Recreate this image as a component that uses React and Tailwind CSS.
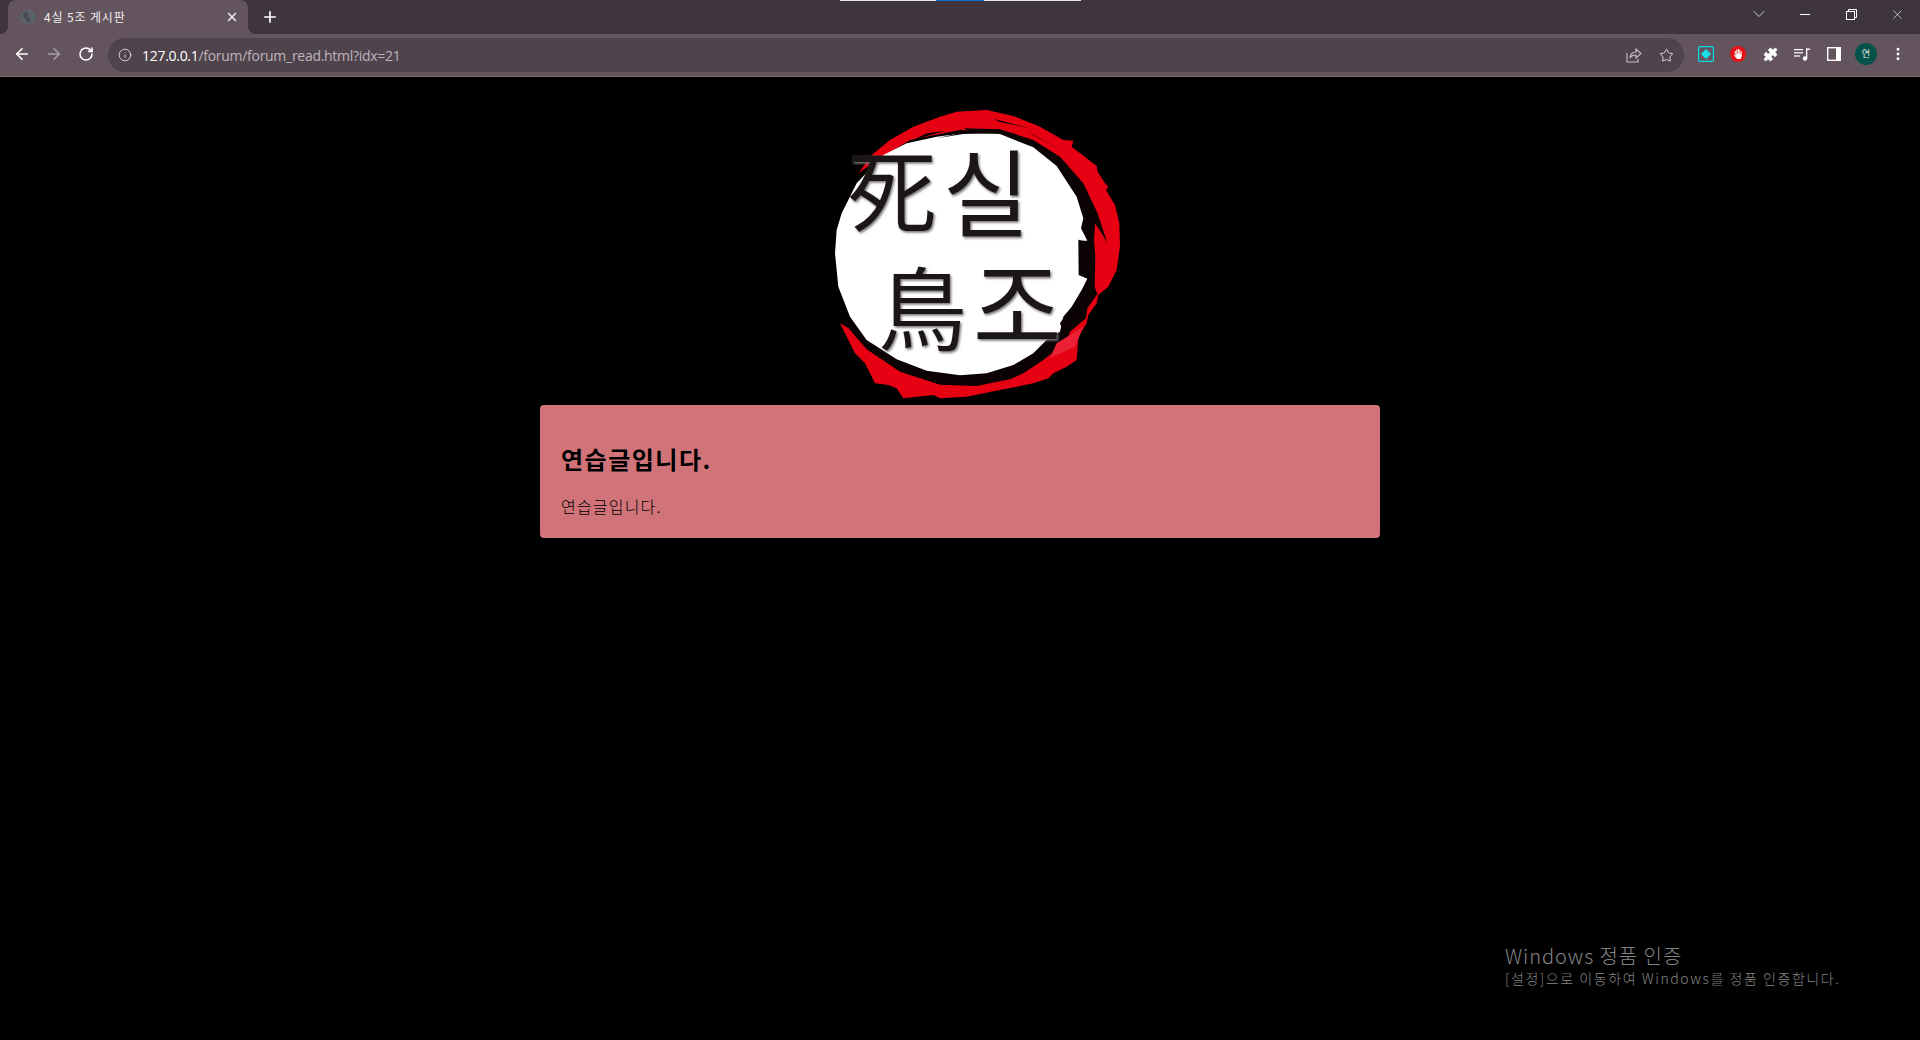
import React from "react";
import { ArrowLeft, ArrowRight, RotateCw, Info, Star, X, Plus, ChevronDown, Puzzle, EllipsisVertical } from "lucide-react";

const KR = { fontFamily: '"Noto Sans CJK KR", "Noto Sans", sans-serif' };

function Box({ children }) {
  return <div className="flex h-8 w-8 shrink-0 items-center justify-center">{children}</div>;
}

function Logo() {
  const glyph = {
    fontFamily: '"Noto Sans CJK KR", sans-serif',
    fontWeight: 400,
    fill: "#1d1413",
    filter: "url(#sh)",
  };
  return (
    <svg viewBox="0 0 1020 945" className="ml-5 block h-[315px] w-[340px]">
      <defs>
        <filter id="sh" x="-10%" y="-10%" width="130%" height="130%">
          <feDropShadow dx="4" dy="5" stdDeviation="2.5" floodColor="#777" />
        </filter>
      </defs>
      <path
        fill="#e60012"
        d="M175 250 L215 195 L270 150 L340 110 L420 80 L470 65 L560 60 L640 78 L720 110 L790 150 L820 152 L815 170 L860 205 L890 228 L893 245 L915 280 L925 290 L918 300 L945 345 L958 400 L960 470 L950 540 L925 590 L895 615 L890 640 L865 675 L860 700 L835 740 L830 810 L800 830 L760 850 L745 865 L700 880 L600 900 L500 920 L420 925 L400 915 L310 925 L290 895 L265 885 L225 880 L195 820 L165 790 L135 730 L120 700 L190 740 L300 830 L480 880 L640 830 L800 690 L880 600 L880 450 L850 300 L760 190 L640 130 L480 120 L330 150 L240 205 Z"
      />
      <path
        fill="#0b0204"
        d="M490 115 L600 118 L700 150 L780 200 L850 280 L892 368 L922 458 L905 430 L885 400 L882 450 L886 500 L884 590 L892 612 L862 655 L858 685 L810 725 L800 755 L730 810 L670 850 L630 868 L530 888 L420 884 L300 845 L200 778 L105 668 L190 730 L300 810 L480 860 L640 815 L780 690 L835 560 L832 450 L850 400 L780 240 L660 150 L510 125 Z"
      />
      <path
        fill="#fff"
        d="M105 490 L110 420 L125 370 L170 280 L250 195 L320 160 L410 140 L500 128 L600 132 L700 172 L770 228 L830 320 L850 385 L835 450 L836 555 L862 566 L845 600 L815 650 L790 680 L780 725 L745 745 L700 790 L640 825 L560 850 L480 856 L380 842 L290 808 L200 750 L150 680 L115 590 Z"
      />
      <path fill="#fff" d="M835 450 L838 405 L862 452 L852 452 Z" />
      <path fill="#0b0204" d="M410 145 L500 125 L580 130 L490 132 Z M320 160 L380 130 L440 122 L380 138 Z" />
      <path fill="#0b0204" d="M580 86 L690 115 L600 96 Z M680 122 L800 190 L700 135 Z" />
      <path fill="#ec2035" d="M770 760 L850 710 L825 770 L750 805 Z" />
      <path fill="#0b0204" d="M780 700 L800 670 L850 660 L830 700 L790 730 Z" />
      <text x="142" y="403" fontSize="268" style={glyph}>死</text>
      <text x="428" y="420" fontSize="285" style={glyph}>실</text>
      <text x="233" y="758" fontSize="268" style={glyph}>鳥</text>
      <text x="518" y="757" fontSize="290" style={glyph}>조</text>
    </svg>
  );
}

export default function App() {
  return (
    <div className="relative flex h-[1040px] w-[1920px] flex-col overflow-hidden bg-black" style={KR}>
      {/* capture strip */}
      <div className="absolute left-[840px] top-0 z-10 flex h-px w-[241px]">
        <div className="w-24 bg-[#e8e8e8]" />
        <div className="w-12 bg-[#0a6fd0]" />
        <div className="flex-1 bg-[#e8e8e8]" />
      </div>

      {/* Tab strip */}
      <div className="flex h-[34px] shrink-0 items-end bg-[#3f353d] pl-2">
        <div className="relative flex h-[34px] w-[240px] items-center rounded-t-lg bg-[#64545e] pl-3 pr-2 text-xs text-[#f0edef]">
          <span className="absolute -left-2 bottom-0 h-2 w-2 bg-[radial-gradient(circle_at_0_0,#3f353d_8px,#64545e_8px)]" />
          <span className="absolute -right-2 bottom-0 h-2 w-2 bg-[radial-gradient(circle_at_100%_0,#3f353d_8px,#64545e_8px)]" />
          <svg viewBox="0 0 16 16" className="mr-2 h-4 w-4 shrink-0">
            <circle cx="8" cy="8" r="7.5" fill="#58646a" />
            <path fill="#4c4a52" d="M3 4 L7 2.5 L9 5 L7 8 L10 9 L11 13 L7 13.5 L6 10 L3 8 Z" />
          </svg>
          <span className="flex-1 whitespace-nowrap tracking-[0.85px]">4실 5조 게시판</span>
          <X size={14} strokeWidth={2.5} className="mr-[1px] text-[#f0edef]" />
        </div>
        <div className="ml-2 flex h-[34px] w-7 items-center justify-center">
          <Plus size={18} strokeWidth={2.2} className="text-white" />
        </div>
        <div className="flex-1" />
        <div className="flex h-[28px] w-[46px] items-center justify-center self-start">
          <ChevronDown size={20} strokeWidth={1} className="text-[#e8e4e7]" />
        </div>
        <div className="flex h-[28px] w-[46px] items-center justify-center self-start">
          <div className="h-px w-[10px] bg-white" />
        </div>
        <div className="flex h-[28px] w-[46px] items-center justify-center self-start">
          <svg viewBox="0 0 11 11" className="h-[11px] w-[11px]" fill="none" stroke="#fff" strokeWidth="1">
            <rect x="0.5" y="2.5" width="8" height="8" />
            <path d="M2.5 2.5 V0.5 H10.5 V8.5 H8.5" />
          </svg>
        </div>
        <div className="flex h-[28px] w-[46px] items-center justify-center self-start">
          <X size={15} strokeWidth={1} className="text-white" />
        </div>
      </div>

      {/* Toolbar */}
      <div className="flex h-[43px] shrink-0 items-start border-b border-[#80707a] bg-[#64545e] pt-[4px] pl-[6px] pr-[6px]">
        <Box><ArrowLeft size={18} strokeWidth={2.2} className="text-white" /></Box>
        <Box><ArrowRight size={18} strokeWidth={2.2} className="text-[#a89ea5]" /></Box>
        <Box><RotateCw size={16} strokeWidth={2.4} className="text-white" /></Box>
        <div className="ml-[6px] mr-[6px] flex h-[34px] flex-1 items-center rounded-full bg-[#4f434c] pl-[10px] pr-[2px]">
          <Info size={14} strokeWidth={1.6} className="mr-[10px] shrink-0 text-[#dcd8db]" />
          <span className="flex-1 whitespace-nowrap text-[14px] tracking-[-0.29px] text-[#bdb4ba]" style={{ fontFamily: '"Open Sans", sans-serif' }}>
            <span className="text-white">127.0.0.1</span>/forum/forum_read.html?idx=21
          </span>
          <Box>
            <svg viewBox="0 0 16 16" className="h-4 w-4" fill="none" stroke="#c9c2c7" strokeWidth="1.1">
              <path d="M1 6 V15 H12 V12" />
              <path d="M4 11 C4.5 7 7 5 10 5 V2 L15 6.5 L10 11 V8 C8 8 5.5 8.5 4 11 Z" />
            </svg>
          </Box>
          <Box><Star size={15} strokeWidth={1.6} className="text-[#dcd8db]" /></Box>
        </div>
        <Box>
          <svg viewBox="0 0 16 16" className="h-4 w-4">
            <rect x="0.6" y="0.6" width="14.8" height="14.8" rx="1.5" fill="none" stroke="#00dfe6" strokeWidth="1.2" />
            <path d="M8 3.5 L12.5 8 L8 12.5 L3.5 8 Z" fill="#19e3ea" stroke="#19e3ea" strokeLinejoin="round" />
          </svg>
        </Box>
        <Box>
          <svg viewBox="0 0 16 16" className="h-4 w-4">
            <circle cx="8" cy="8" r="8" fill="#e3111a" />
            <path
              fill="#fff"
              d="M4.8 8.2 V5 H5.8 V8 H6.3 V3.6 H7.3 V7.8 H7.8 V3 H8.8 V7.8 H9.3 V3.8 H10.3 V8 H10.8 V5.6 H11.8 V10 L10.6 13 H7 L4 9.2 L4.6 8.6 L5.8 9.6 V8.2 Z"
            />
          </svg>
        </Box>
        <Box><Puzzle size={15} strokeWidth={1} fill="#fff" className="text-white" /></Box>
        <Box>
          <svg viewBox="0 0 16 16" className="h-4 w-4" fill="#fff">
            <rect x="0" y="3" width="9" height="1.2" />
            <rect x="0" y="6.2" width="9" height="1.2" />
            <rect x="0" y="9.4" width="6" height="1.2" />
            <rect x="12" y="2.5" width="4" height="1.4" />
            <rect x="12" y="2.5" width="1.3" height="10" />
            <circle cx="11" cy="12.5" r="2.2" />
          </svg>
        </Box>
        <Box>
          <svg viewBox="0 0 14 14" className="h-[14px] w-[14px]">
            <rect width="14" height="14" fill="#fff" />
            <rect x="1.4" y="1.4" width="7.6" height="11.2" fill="#64545e" />
          </svg>
        </Box>
        <Box>
          <div className="flex h-[22px] w-[22px] items-center justify-center rounded-full bg-[#04534a] text-[9px] text-[#e6e6e6]">연</div>
        </Box>
        <Box><EllipsisVertical size={16} strokeWidth={2.4} className="text-white" /></Box>
      </div>

      {/* Page */}
      <main className="flex flex-1 flex-col items-center bg-black pt-[13px]">
        <Logo />
        <article className="h-[133px] w-[840px] rounded bg-[#d1747a] px-[21px] pt-[38px] text-black">
          <h1 className="text-[24px] font-bold leading-[32px] tracking-[1.5px]">연습글입니다.</h1>
          <p className="mt-[19px] text-[16px] font-light leading-6 tracking-[1.2px]">연습글입니다.</p>
        </article>
      </main>

      {/* Activation watermark */}
      <div className="absolute left-[1505px] top-[942px] font-light text-[#858585]">
        <div className="text-[20px] leading-[28px] tracking-[0.95px]">Windows 정품 인증</div>
        <div className="text-[14px] leading-[16px] tracking-[1.56px]">[설정]으로 이동하여 Windows를 정품 인증합니다.</div>
      </div>
    </div>
  );
}
